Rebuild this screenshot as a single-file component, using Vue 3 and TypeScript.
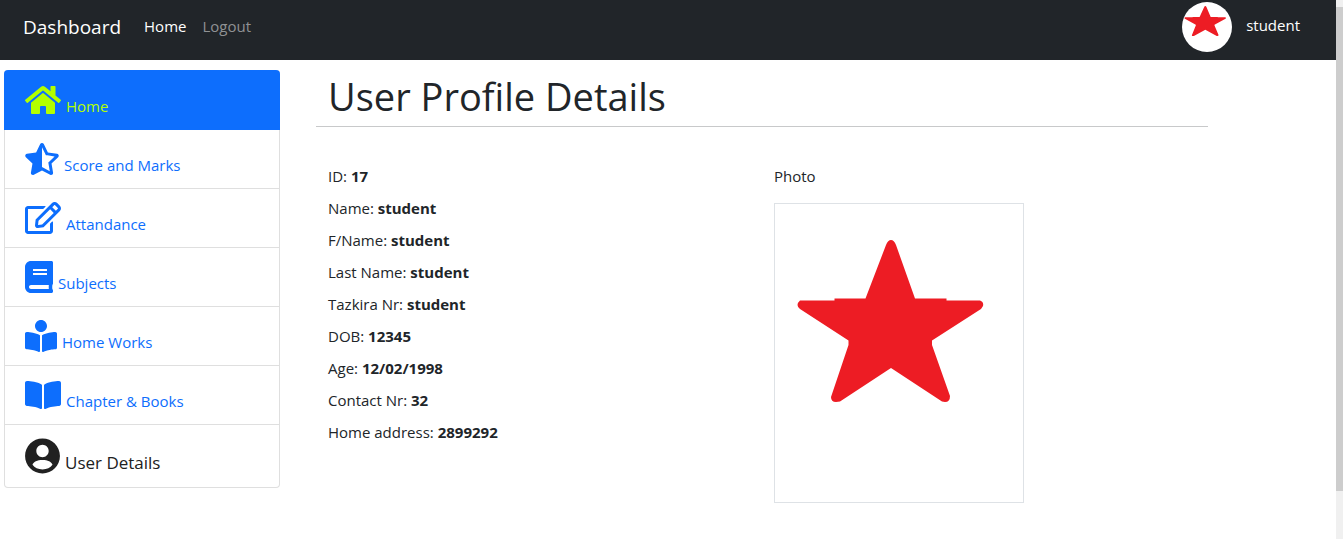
<script setup lang="ts">
interface MenuItem {
  label: string
  width: number
  viewBox: string
  path: string
  kind?: 'active' | 'current'
}

interface Detail {
  label: string
  value: string
}

const menu: MenuItem[] = [
  {
    label: 'Home',
    width: 36,
    viewBox: '0 0 576 512',
    kind: 'active',
    path: 'M280.37 148.26L96 300.11V464a16 16 0 0 0 16 16l112.06-.29a16 16 0 0 0 15.92-16V368a16 16 0 0 1 16-16h64a16 16 0 0 1 16 16v95.64a16 16 0 0 0 16 16.05L464 480a16 16 0 0 0 16-16V300L295.67 148.26a12.19 12.19 0 0 0-15.3 0zM571.6 251.47L488 182.56V44.05a12 12 0 0 0-12-12h-56a12 12 0 0 0-12 12v72.61L318.47 43a48 48 0 0 0-61 0L4.34 251.47a12 12 0 0 0-1.6 16.9l25.5 31A12 12 0 0 0 45.15 301l235.22-193.74a12.19 12.19 0 0 1 15.3 0L530.9 301a12 12 0 0 0 16.9-1.6l25.5-31a12 12 0 0 0-1.7-16.93z',
  },
  {
    label: 'Score and Marks',
    width: 34,
    viewBox: '0 0 536 512',
    path: 'M508.55 171.51L362.18 150.2 296.77 17.81C290.89 5.98 279.42 0 267.95 0c-11.4 0-22.79 5.9-28.69 17.81l-65.43 132.38-146.38 21.29c-26.25 3.8-36.77 36.09-17.74 54.59l105.89 103-25.06 145.48C86.98 495.33 103.57 512 122.15 512c4.93 0 10-1.17 14.87-3.75l130.95-68.68 130.94 68.7c4.86 2.55 9.92 3.71 14.83 3.71 18.6 0 35.22-16.61 31.66-37.4l-25.03-145.49 105.91-102.98c19.04-18.5 8.52-50.8-17.73-54.6zm-121.74 123.2l-18.12 17.62 4.28 24.88 19.52 113.45-102.13-53.59-22.38-11.74.03-317.19 51.03 103.29 11.18 22.63 25.01 3.64 114.23 16.63-82.65 80.38z',
  },
  {
    label: 'Attandance',
    width: 36,
    viewBox: '0 0 576 512',
    path: 'M402.3 344.9l32-32c5-5 13.7-1.5 13.7 5.7V464c0 26.5-21.5 48-48 48H48c-26.5 0-48-21.5-48-48V112c0-26.5 21.5-48 48-48h273.5c7.1 0 10.7 8.6 5.7 13.7l-32 32c-1.5 1.5-3.5 2.3-5.7 2.3H48v352h352V350.5c0-2.1.8-4.1 2.3-5.6zm156.6-201.8L296.3 405.7l-90.4 10c-26.2 2.9-48.5-19.2-45.6-45.6l10-90.4L432.9 17.1c22.9-22.9 59.9-22.9 82.7 0l43.2 43.2c22.9 22.9 22.9 60 .1 82.8zM460.1 174L402 115.9 216.2 301.8l-7.3 65.3 65.3-7.3L460.1 174zm64.8-79.7l-43.2-43.2c-4.1-4.1-10.8-4.1-14.8 0L436 82l58.1 58.1 30.9-30.9c4-4.2 4-10.8-.1-14.9z',
  },
  {
    label: 'Subjects',
    width: 28,
    viewBox: '0 0 448 512',
    path: 'M448 360V24c0-13.3-10.7-24-24-24H96C43 0 0 43 0 96v320c0 53 43 96 96 96h328c13.3 0 24-10.7 24-24v-16c0-7.5-3.5-14.3-8.9-18.7-4.2-15.4-4.2-59.3 0-74.7 5.4-4.3 8.9-11.1 8.9-18.6zM128 134c0-3.3 2.7-6 6-6h212c3.3 0 6 2.7 6 6v20c0 3.3-2.7 6-6 6H134c-3.3 0-6-2.7-6-6v-20zm0 64c0-3.3 2.7-6 6-6h212c3.3 0 6 2.7 6 6v20c0 3.3-2.7 6-6 6H134c-3.3 0-6-2.7-6-6v-20zm253.4 250H96c-17.7 0-32-14.3-32-32 0-17.6 14.4-32 32-32h285.4c-1.9 17.1-1.9 46.9 0 64z',
  },
  {
    label: 'Home Works',
    width: 32,
    viewBox: '0 0 512 512',
    path: 'M352 96c0-53.02-42.98-96-96-96s-96 42.98-96 96 42.98 96 96 96 96-42.98 96-96zM233.59 241.1c-59.33-36.32-155.43-46.3-203.79-49.05C13.55 191.13 0 203.51 0 219.14v222.8c0 14.33 11.59 26.28 26.49 27.05 43.66 2.29 131.99 10.68 193.04 41.43 9.37 4.72 20.48-1.71 20.48-11.87V252.56c-.01-4.67-2.32-8.95-6.42-11.46zm248.61-49.05c-48.35 2.74-144.46 12.73-203.78 49.05-4.1 2.51-6.41 6.96-6.41 11.63v245.79c0 10.19 11.14 16.63 20.54 11.9 61.04-30.72 149.32-39.11 192.97-41.4 14.9-.78 26.49-12.73 26.49-27.06V219.14c-.01-15.63-13.56-28.01-29.81-27.09z',
  },
  {
    label: 'Chapter & Books',
    width: 36,
    viewBox: '0 0 576 512',
    path: 'M542.22 32.05c-54.8 3.11-163.72 14.43-230.96 55.59-4.64 2.84-7.27 7.89-7.27 13.17v363.87c0 11.55 12.63 18.85 23.28 13.49 69.18-34.82 169.23-44.32 218.7-46.92 16.89-.89 30.02-14.43 30.02-30.66V62.75c.01-17.71-15.35-31.74-33.77-30.7zM264.73 87.64C197.5 46.48 88.58 35.17 33.78 32.05 15.36 31.01 0 45.04 0 62.75V400.6c0 16.24 13.13 29.78 30.02 30.66 49.49 2.6 149.59 12.11 218.77 46.95 10.62 5.35 23.21-1.94 23.21-13.46V100.63c0-5.29-2.62-10.14-7.27-12.99z',
  },
  {
    label: 'User Details',
    width: 35,
    viewBox: '0 0 496 512',
    kind: 'current',
    path: 'M248 8C111 8 0 119 0 256s111 248 248 248 248-111 248-248S385 8 248 8zm0 88c48.600 0 88 39.400 88 88s-39.400 88-88 88-88-39.400-88-88 39.400-88 88-88zm0 352c-62 0-112-24-142-66 8-42 70-70 142-70s134 28 142 70c-30 42-80 66-142 66z',
  },
]

const details: Detail[] = [
  { label: 'ID', value: '17' },
  { label: 'Name', value: 'student' },
  { label: 'F/Name', value: 'student' },
  { label: 'Last Name', value: 'student' },
  { label: 'Tazkira Nr', value: 'student' },
  { label: 'DOB', value: '12345' },
  { label: 'Age', value: '12/02/1998' },
  { label: 'Contact Nr', value: '32' },
  { label: 'Home address', value: '2899292' },
]

const star =
  'M112 42Q114 37 117 37Q120 37 122 42L141 95.5H172.5V97.5H206Q210 99 209 103L207 106L158 137.5V142L176 193Q176 199 171 199L168 198.500L117 165L66 198.500L62 199Q57 199 57 194L74.500 142V137.500L26 106Q21 102 26 97.500H60.500V95.500H91.500Z'
</script>

<template>
  <div class="page">
    <div class="view">
      <header class="navbar">
        <a class="brand" href="#">Dashboard</a>
        <nav class="links">
          <a class="on" href="#">Home</a>
          <a href="#">Logout</a>
        </nav>
        <a class="account" href="#">
          <svg class="avatar" viewBox="13 15 223 270" preserveAspectRatio="none" aria-hidden="true">
            <path :d="star" />
          </svg>
          <span>student</span>
        </a>
      </header>

      <div class="body">
        <nav class="menu">
          <a v-for="item in menu" :key="item.label" href="#" class="item" :class="item.kind">
            <svg class="icon" :width="item.width" :viewBox="item.viewBox" aria-hidden="true">
              <path :d="item.path" />
            </svg>
            <span>{{ item.label }}</span>
          </a>
        </nav>

        <main class="content">
          <h1>User Profile Details</h1>
          <div class="columns">
            <section>
              <p v-for="d in details" :key="d.label">
                {{ d.label }}: <b>{{ d.value }}</b>
              </p>
            </section>
            <section>
              <p>Photo</p>
              <svg class="photo" viewBox="0 0 250 300" role="img" aria-label="Photo">
                <path :d="star" />
              </svg>
            </section>
          </div>
        </main>
      </div>
    </div>
    <div class="scrollbar" aria-hidden="true"><div class="thumb"></div></div>
  </div>
</template>

<style>
body {
  margin: 0;
  background: #fff;
}
</style>

<style scoped>
.page {
  display: flex;
  min-height: 100vh;
  font-family: "Open Sans", "Noto Sans", sans-serif;
  font-size: 15px;
  line-height: 24px;
  color: #212529;
}
.page * {
  box-sizing: border-box;
}
a {
  text-decoration: none;
}
.view {
  flex: 1;
  min-width: 0;
}
.navbar {
  display: flex;
  align-items: flex-start;
  height: 60px;
  padding: 2px 36px 0 23px;
  background: #212529;
}
.brand {
  margin-right: 23px;
  font-size: 19px;
  line-height: 50px;
  color: #fff;
}
.links {
  display: flex;
  gap: 16px;
  line-height: 48px;
}
.links a {
  color: #909294;
}
.links .on {
  color: #fff;
}
.account {
  display: flex;
  gap: 14px;
  margin-left: auto;
  line-height: 46px;
  color: #fff;
}
.avatar {
  width: 50px;
  height: 50px;
  border-radius: 50%;
  background: #fff;
  fill: #ed1c24;
}
.body {
  display: flex;
  align-items: flex-start;
  gap: 36px;
  padding: 10px 0 0 4px;
}
.menu {
  flex: 0 0 276px;
  border: 1px solid #dfdfdf;
  border-top: 0;
  border-radius: 4px;
}
.item {
  display: flex;
  align-items: flex-end;
  gap: 5px;
  padding: 13px 20px;
  border-bottom: 1px solid #dfdfdf;
  line-height: 20px;
  color: #0d6efd;
}
.item:last-child {
  border-bottom: 0;
}
.icon {
  height: 32px;
  fill: currentColor;
}
.active {
  margin: 0 -1px;
  padding: 14px 21px 13px;
  border-color: #0d6efd;
  border-radius: 4px 4px 0 0;
  background: #0d6efd;
  color: #b3ff00;
}
.current {
  font-size: 17px;
  line-height: 22px;
  color: #212121;
}
.current .icon {
  height: 36px;
}
.content {
  flex: 0 1 892px;
  min-width: 0;
}
h1 {
  margin: 0;
  padding: 0 12px 4px;
  border-bottom: 1px solid #c8c9ca;
  font-size: 38px;
  line-height: 52px;
  font-weight: 400;
}
.columns {
  display: grid;
  grid-template-columns: 1fr 1fr;
  padding-top: 37px;
}
section {
  padding: 0 12px;
}
p {
  margin: 0 0 8px;
}
.photo {
  display: block;
  width: 250px;
  height: 300px;
  margin-top: 15px;
  outline: 1px solid #dee2e6;
  outline-offset: -1px;
  fill: #ed1c24;
}
.scrollbar {
  width: 7px;
  padding-top: 7px;
  background: #f0f0f0;
}
.thumb {
  height: 91%;
  background: #cdcdcd;
}
</style>
